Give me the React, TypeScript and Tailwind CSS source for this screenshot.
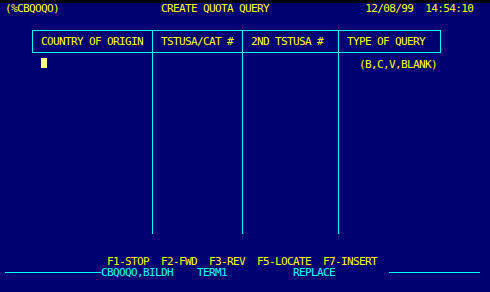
const mono = "font-['DejaVu_Sans_Mono',monospace] text-[11px] leading-[11px] tracking-[-0.62px] whitespace-pre";

export default function App() {
  return (
    <div className="h-[292px] w-[490px] bg-black pt-[1px]">
      <div className={`h-[290px] w-[490px] bg-[#000073] ${mono}`}>
        {/* title line */}
        <div className="mt-[2px] h-[11px] pl-[5px] text-[#ffff00]">
          {"(%CBQOQO)                 CREATE QUOTA QUERY                12/08/99  14:54:10"}
        </div>

        {/* query table */}
        <div className="ml-[32px] mt-[16px] w-[409px]">
          <div className="flex h-[23px] items-center border border-[#00ffff] text-[#ffff00]">
            <div className="flex h-full w-[119px] items-center pl-[8px]">COUNTRY OF ORIGIN</div>
            <div className="flex h-full w-[90px] items-center border-l border-[#00ffff] pl-[8px]">TSTUSA/CAT #</div>
            <div className="flex h-full w-[96px] items-center border-l border-[#00ffff] pl-[8px]">2ND TSTUSA #</div>
            <div className="flex h-full w-[102px] items-center border-l border-[#00ffff] pl-[8px]">TYPE OF QUERY</div>
          </div>
          <div className="flex h-[181px]">
            <div className="w-[120px] pl-[9px] pt-[5px]">
              <div className="h-[10px] w-[6px] bg-[#ffff80]" />
            </div>
            <div className="w-[90px] border-l border-[#00ffff]" />
            <div className="w-[96px] border-l border-[#00ffff]" />
            <div className="w-[103px] border-l border-[#00ffff] pl-[20px] pt-[6px] text-[#ffff00]">
              (B,C,V,BLANK)
            </div>
          </div>
        </div>

        {/* function keys */}
        <div className="mt-[22px] h-[11px] pl-[107px] text-[#ffff00]">
          {"F1-STOP  F2-FWD  F3-REV  F5-LOCATE  F7-INSERT"}
        </div>

        {/* status line */}
        <div className="flex h-[11px] items-center pl-[5px] text-[#00ffff]">
          <div className="h-[1px] w-[96px] bg-[#00ffff]" />
          <span>{"CBQOQO,BILDH    TERM1           REPLACE"}</span>
          <div className="ml-[54px] h-[1px] w-[91px] bg-[#00ffff]" />
        </div>
      </div>
    </div>
  );
}
